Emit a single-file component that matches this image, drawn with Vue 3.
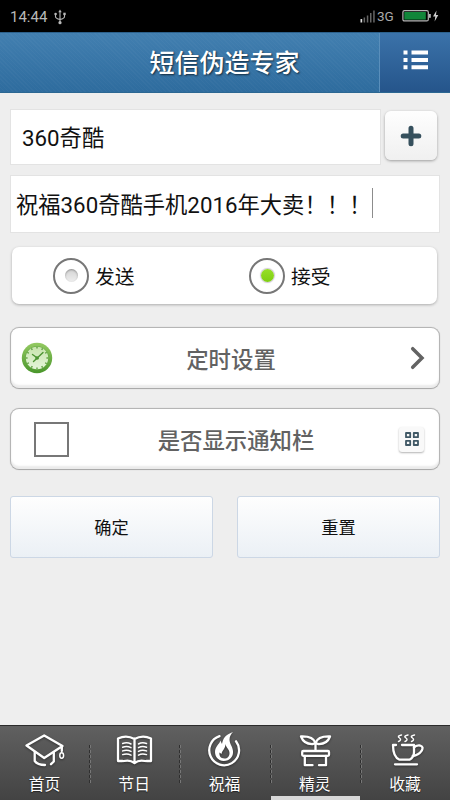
<script setup>
import { ref } from 'vue'

const direction = ref('receive')
const name = ref('360奇酷')
const message = ref('祝福360奇酷手机2016年大卖！！！')
const options = [
  { id: 'send', label: '发送' },
  { id: 'receive', label: '接受' },
]
const tabs = [
  { id: 'home', label: '首页' },
  { id: 'festival', label: '节日' },
  { id: 'wish', label: '祝福' },
  { id: 'sprite', label: '精灵' },
  { id: 'favorite', label: '收藏' },
]
const activeTab = ref('sprite')
const ticks = Array.from({ length: 12 }, (_, i) => i * 30)
</script>

<template>
  <div class="screen">
    <div class="status">
      <span class="time">14:44</span>
      <svg class="usb" width="12" height="16" viewBox="0 0 12 16">
        <path d="M6 2V14M1.5 5V7.5Q1.5 9.5 6 10.5Q10.5 9.5 10.5 7.5V5" fill="none" stroke="#b8b8b8" stroke-width="1.1" />
        <path d="M4.3 3.2L6 .4L7.7 3.2Z" fill="#b8b8b8" />
        <circle cx="6" cy="13.7" r="1.6" fill="#b8b8b8" />
        <circle cx="1.6" cy="5" r="1.3" fill="#b8b8b8" />
        <rect x="9.3" y="3.7" width="2.4" height="2.4" fill="#b8b8b8" />
      </svg>
      <span class="grow"></span>
      <svg class="signal" width="16" height="13" viewBox="0 0 16 13">
        <rect x="0.5" y="9" width="1.7" height="3.5" fill="#ddd" />
        <rect x="3.6" y="7.5" width="1.5" height="5" fill="#666" />
        <rect x="6.8" y="5.5" width="1.5" height="7" fill="#666" />
        <rect x="10" y="3" width="1.5" height="9.5" fill="#666" />
        <rect x="13.2" y="0.5" width="1.5" height="12" fill="#666" />
      </svg>
      <span class="net">3G</span>
      <svg class="battery" width="38" height="14" viewBox="0 0 38 14">
        <rect x=".9" y="1.7" width="25.4" height="10.2" rx="1.5" fill="#000" stroke="#b5b5b5" stroke-width="1.2" />
        <rect x="2.3" y="3" width="21.5" height="7.6" fill="#11863a" />
        <rect x="27" y="5" width="1.8" height="3.8" fill="#b5b5b5" />
        <path d="M34.5 1.5L31 7.6H33.3L32.6 12.5L36.3 6H34Z" fill="#ccc" />
      </svg>
    </div>

    <header class="header">
      <h1>短信伪造专家</h1>
      <button class="menu" aria-label="菜单">
        <svg width="26" height="20" viewBox="0 0 26 20">
          <path d="M.5 .5h4v4h-4zM8.500 .5h16.5v4H8.500zM.5 8h4v4h-4zM8.500 8h16.5v4H8.500zM.5 15.300h4v4h-4zM8.500 15.300h16.5v4H8.500z" fill="#fff" />
        </svg>
      </button>
    </header>

    <main class="content">
      <div class="contact">
        <div class="field name">{{ name }}</div>
        <button class="add" aria-label="添加">
          <svg width="22" height="22" viewBox="0 0 22 22">
            <path d="M11 3.200V18.800M3.200 11H18.800" stroke="#36505d" stroke-width="5" stroke-linecap="round" />
          </svg>
        </button>
      </div>

      <div class="field message">{{ message }}<i class="caret"></i></div>

      <div class="radios">
        <label v-for="o in options" :key="o.id" class="radio" @click="direction = o.id">
          <span class="ring"><span class="dot" :class="{ on: direction === o.id }"></span></span>
          <span class="radio-label">{{ o.label }}</span>
        </label>
      </div>

      <div class="card timer">
        <svg class="clock" width="32" height="32" viewBox="0 0 32 32">
          <defs>
            <linearGradient id="rim" x1="0" y1="0" x2="0" y2="1">
              <stop offset="0" stop-color="#94ca62" />
              <stop offset="1" stop-color="#4a962b" />
            </linearGradient>
            <linearGradient id="face" x1="0" y1="0" x2="0" y2="1">
              <stop offset="0" stop-color="#c8e4ae" />
              <stop offset="1" stop-color="#e4f5d8" />
            </linearGradient>
          </defs>
          <circle cx="16" cy="16" r="15.2" fill="url(#rim)" />
          <circle cx="16" cy="16" r="11.8" fill="#64a842" />
          <circle cx="16" cy="16" r="11.2" fill="url(#face)" />
          <path v-for="t in ticks" :key="t" d="M16 4.800V6.600" stroke="#579d38" stroke-width="1.300" :transform="`rotate(${t} 16 16)`" />
          <path d="M22 10.500L12.500 19.500M11.500 12.500L17 16.500" stroke="#4c9432" stroke-width="1.400" stroke-linecap="round" />
          <circle cx="16" cy="16" r="1.800" fill="#4c9432" />
        </svg>
        <span class="card-title">定时设置</span>
        <svg class="chevron" width="16" height="24" viewBox="0 0 16 24">
          <path d="M2.700 2.700L12 12L2.700 21.300" fill="none" stroke="#636363" stroke-width="3.500" stroke-linecap="round" />
        </svg>
      </div>

      <div class="card notify">
        <span class="checkbox"></span>
        <span class="card-title">是否显示通知栏</span>
        <span class="grid-btn">
          <svg width="14" height="14" viewBox="0 0 14 14">
            <path d="M1 1h4.200v4.200H1zM8.800 1h4.200v4.200H8.800zM1 8.800h4.200v4.200H1zM8.800 8.800h4.200v4.200H8.800z" fill="none" stroke="#405865" stroke-width="1.800" stroke-linejoin="round" />
          </svg>
        </span>
      </div>

      <div class="actions">
        <button class="action">确定</button>
        <button class="action">重置</button>
      </div>
    </main>

    <nav class="tabs">
      <div v-for="t in tabs" :key="t.id" class="tab" :class="{ active: t.id === activeTab }" @click="activeTab = t.id">
        <svg class="tab-icon" width="44" height="40" viewBox="0 0 44 40">
          <g v-if="t.id === 'home'" class="line">
            <path d="M3.500 18.500L21.200 8.500L39.500 19L21.200 31Z" />
            <path d="M11.700 25V34Q14.500 38 22 38M30.800 25.500V34.500L28 37.200M38.800 19.500V24" />
            <ellipse cx="38.700" cy="28.500" rx="1.900" ry="2.700" class="thin" />
          </g>
          <g v-else-if="t.id === 'festival'" class="line">
            <path d="M10.500 34H6V11.500Q14.500 7.500 22.500 12Q30.500 7.500 39 11.500V34H34.500M12 34Q18 32.500 22.500 36Q27 32.500 33 34M22.500 12V35" />
            <path class="thin" d="M10.700 16.500Q15 15 19 17M10.700 20.200Q15 18.700 19 20.700M10.700 23.900Q15 22.400 19 24.400M10.700 27.600Q15 26.100 19 28.100M26.500 17Q30 15 34.500 16.500M26.500 20.700Q30 18.700 34.500 20.200M26.500 24.400Q30 22.400 34.500 23.900M26.500 28.100Q30 26.100 34.500 27.600" />
          </g>
          <g v-else-if="t.id === 'wish'">
            <path class="line" d="M17.500 9.200A14.900 14.900 0 1 0 34 14.300" />
            <path fill="#fff" fill-rule="evenodd" d="M31 5C22.500 8 21 12 20 17L18.300 13.500C18 17 13 19 13 25C13 30 16.500 33.600 21.500 34C28 34 31.500 29.500 31 24C30.700 19.500 27.500 17 27.500 12.500C27.500 9.500 29 7 31 5ZM23.500 17C24 21 27.500 22 27.500 26C27.500 29.500 25.500 31.500 22.500 31.500C18.500 31.500 17 28.500 17.500 25.500L19.500 27C20 23.500 23.500 21.500 23.500 17Z" />
          </g>
          <g v-else-if="t.id === 'sprite'" class="line">
            <path d="M22.500 23V16Q20 9 8 9.500Q11 17.500 20 17L22.500 16Q25 9 37 9.500Q34 17.500 25 17L22.500 16" />
            <rect x="9.200" y="24" width="26.800" height="4.800" rx="1" />
            <path d="M11.800 29V38.200H19.500M33 29V38.200H26" />
          </g>
          <g v-else class="line">
            <path d="M19 18H31V25Q31 30.500 26.500 32.700H16.500Q10 30 10 18H13" />
            <path d="M31 20.500Q33 18 37 18.500Q41 19.500 38.700 23.700Q35.500 28.500 29.700 29M12 37.300H34" />
            <path class="thin" d="M18.500 8Q13.500 9 16.500 11Q19 13 15.500 14.500M25 8Q20 9 23 11Q25.500 13 22 14.500M31.500 8Q26.500 9 29.500 11Q32 13 28.500 14.500" />
          </g>
        </svg>
        <span class="tab-label">{{ t.label }}</span>
      </div>
    </nav>
  </div>
</template>

<style>
body {
  margin: 0;
}
</style>

<style scoped>
.screen {
  width: 450px;
  height: 800px;
  display: flex;
  flex-direction: column;
  overflow: hidden;
  background: #eeeeee;
  color: #111;
  font-family: Roboto, "Noto Sans CJK SC", sans-serif;
}
button {
  padding: 0;
  margin: 0;
  border: 0;
  font-family: inherit;
  color: inherit;
}
svg {
  display: block;
  flex: none;
}
.status {
  height: 32px;
  flex: none;
  box-sizing: border-box;
  padding: 0 10px;
  display: flex;
  align-items: center;
  background: #000;
  color: #b8b8b8;
  font-size: 15px;
}
.time {
  width: 44px;
  padding-top: 1px;
}
.usb {
  margin-top: 1px;
}
.grow {
  flex: 1;
}
.net {
  width: 25px;
  margin-left: 1px;
  font-size: 13.500px;
  color: #aaa;
}
.header {
  height: 61px;
  flex: none;
  box-sizing: border-box;
  display: flex;
  border-top: 1px solid #2c618c;
  border-bottom: 1px solid #2b6792;
  background:
    repeating-linear-gradient(45deg, rgba(255, 255, 255, 0.025) 0 1px, transparent 1px 3px),
    linear-gradient(#427fb0, #2e6c9e);
}
h1 {
  flex: 1;
  margin: 0;
  padding: 1px 0 0 70px;
  line-height: 59px;
  text-align: center;
  color: #fff;
  font-size: 25px;
  font-weight: 500;
  text-shadow: 1px 1px 2px rgba(0, 0, 0, 0.65);
}
.menu {
  width: 71px;
  box-sizing: border-box;
  padding: 0 0 5px 1px;
  display: flex;
  align-items: center;
  justify-content: center;
  border-left: 1px solid #5a8fbb;
  background: linear-gradient(#3b72a9, #25558b);
}
.content {
  flex: 1;
  padding: 16px 10px 0;
  display: flex;
  flex-direction: column;
}
.contact {
  display: flex;
  height: 56px;
}
.field {
  box-sizing: border-box;
  padding-bottom: 2px;
  display: flex;
  align-items: center;
  border: 1px solid #e3e3e3;
  background: #fff;
  font-size: 22.300px;
  white-space: nowrap;
}
.name {
  width: 371px;
  padding-left: 11px;
}
.add {
  width: 52px;
  height: 49px;
  margin: 2px 0 0 4px;
  display: flex;
  align-items: center;
  justify-content: center;
  border-radius: 6px;
  background: linear-gradient(#fefefe, #f0f0f0);
  box-shadow: 0 1px 3px rgba(0, 0, 0, 0.35);
}
.message {
  height: 58px;
  margin-top: 10px;
  padding-left: 5px;
}
.caret {
  width: 1px;
  height: 30px;
  margin-left: 1px;
  background: #8c8c8c;
}
.radios {
  height: 57px;
  margin: 14px 3px 0 2px;
  padding-left: 41px;
  display: flex;
  align-items: center;
  border-radius: 7px;
  background: #fff;
  box-shadow: 0 1px 3px rgba(0, 0, 0, 0.28);
}
.radio {
  width: 196px;
  flex: none;
  display: flex;
  align-items: center;
  gap: 6px;
  font-size: 19.800px;
  line-height: 36px;
}
.radio + .radio {
  width: auto;
}
.radio-label {
  padding-top: 4px;
  line-height: 32px;
}
.ring {
  width: 36px;
  height: 36px;
  box-sizing: border-box;
  display: flex;
  align-items: center;
  justify-content: center;
  border: 2px solid #777;
  border-radius: 50%;
}
.dot {
  width: 13px;
  height: 13px;
  border-radius: 50%;
  background: linear-gradient(#d4d4d4, #eee);
  box-shadow: inset 0 1px 2px rgba(0, 0, 0, 0.32);
}
.dot.on {
  background: linear-gradient(#97df27, #7fce12);
  box-shadow: 0 0 1px 1px #cfc8d4;
}
.card {
  height: 62px;
  box-sizing: border-box;
  display: flex;
  align-items: center;
  border: 1px solid #b5b5b5;
  border-bottom: 1px solid #aaa;
  border-radius: 9px;
  background: #fff;
  box-shadow: inset 0 -3px 2px #ebebeb, 0 0 1px #bbb;
}
.card-title {
  flex: 1;
  padding-bottom: 1px;
  text-align: center;
  font-size: 22.400px;
  font-weight: 500;
  color: #626262;
}
.timer {
  margin-top: 23px;
  padding: 0 13px 0 10px;
}
.timer .card-title {
  padding-right: 1px;
}
.notify {
  margin-top: 19px;
  padding: 0 15px 0 23px;
}
.notify .card-title {
  padding-left: 4px;
}
.checkbox {
  width: 35px;
  height: 35px;
  box-sizing: border-box;
  border: 2px solid #777;
}
.grid-btn {
  width: 25px;
  height: 25px;
  display: flex;
  align-items: center;
  justify-content: center;
  border-radius: 3px;
  background: #f9f9f9;
  box-shadow: 0 1px 2px rgba(0, 0, 0, 0.3);
}
.actions {
  margin-top: 26px;
  display: flex;
  justify-content: space-between;
}
.action {
  width: 203px;
  height: 62px;
  box-sizing: border-box;
  padding-bottom: 2px;
  border: 1px solid #ccd7e5;
  border-radius: 3px;
  background: linear-gradient(#fefefe, #ebf0f5);
  color: #111;
  font-size: 17.200px;
}
.tabs {
  height: 75px;
  flex: none;
  box-sizing: border-box;
  display: flex;
  border-top: 1px solid #2b2b2b;
  background: linear-gradient(#606060, #434343);
}
.tab {
  position: relative;
  width: 90.300px;
  flex: none;
  box-sizing: border-box;
  padding-top: 1px;
  display: flex;
  flex-direction: column;
  align-items: center;
}
.tab:first-child {
  width: 89px;
}
.tab + .tab::before {
  content: "";
  position: absolute;
  left: 0;
  top: 19px;
  height: 38px;
  border-left: 1px dashed #2f2f2f;
  border-right: 1px dashed #777;
}
.tab.active::after {
  content: "";
  position: absolute;
  left: 1px;
  right: 0;
  bottom: 0;
  height: 4px;
  background: #d8d8d8;
}
.tab-icon {
  filter: drop-shadow(0 1px 1px rgba(0, 0, 0, 0.4));
}
.line {
  fill: none;
  stroke: #fff;
  stroke-width: 2.300;
  stroke-linejoin: round;
  stroke-linecap: round;
}
.line .thin {
  stroke-width: 1.500;
}
.tab-label {
  margin-top: 6px;
  line-height: 24px;
  font-size: 15.800px;
  color: #fff;
  text-shadow: 0 1px 1px #222;
}
</style>
